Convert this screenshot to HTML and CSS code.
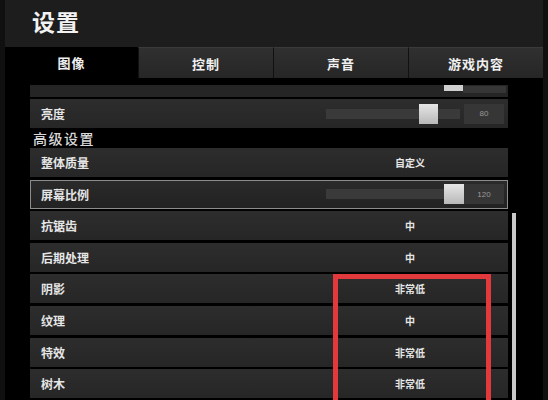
FILE: index.html
```html
<!DOCTYPE html>
<html lang="zh">
<head>
<meta charset="utf-8">
<title>设置</title>
<link rel="stylesheet" href="styles.css">
</head>
<body>
<div class="app">
  <header class="header"><h1 class="title">设置</h1></header>
  <nav class="tabs">
    <div class="tab active">图像</div>
    <div class="tab">控制</div>
    <div class="tab">声音</div>
    <div class="tab">游戏内容</div>
  </nav>
  <main class="content">
    <div class="list">
      <div class="row partial">
        <div class="p-thumb"></div>
        <div class="p-track"></div>
      </div>
      <div class="row">
        <div class="label">亮度</div>
        <div class="slider"><div class="thumb" style="left:93px"></div></div>
        <div class="numbox">80</div>
      </div>
      <div class="section">高级设置</div>
      <div class="rows">
        <div class="row"><div class="label">整体质量</div><div class="value">自定义</div></div>
        <div class="row selected">
          <div class="label">屏幕比例</div>
          <div class="slider"><div class="thumb" style="left:118px"></div></div>
          <div class="numbox">120</div>
        </div>
        <div class="row"><div class="label">抗锯齿</div><div class="value">中</div></div>
        <div class="row"><div class="label">后期处理</div><div class="value">中</div></div>
        <div class="row"><div class="label">阴影</div><div class="value">非常低</div></div>
        <div class="row"><div class="label">纹理</div><div class="value">中</div></div>
        <div class="row"><div class="label">特效</div><div class="value">非常低</div></div>
        <div class="row"><div class="label">树木</div><div class="value">非常低</div></div>
      </div>
    </div>
    <div class="scrollbar"><div class="scroll-thumb"></div></div>
  </main>
  <div class="mark"></div>
</div>
</body>
</html>
```

FILE: styles.css
```css
* { box-sizing: border-box; }
html, body { margin: 0; padding: 0; }
body {
  width: 548px;
  height: 400px;
  overflow: hidden;
  background: #101010;
  font-family: "Noto Sans CJK SC", "Noto Sans", sans-serif;
  color: #e8e8e8;
}
.app {
  margin-left: 5px;
  width: 538px;
  height: 400px;
  background: #000;
  position: relative;
  overflow: hidden;
}
.header {
  height: 47px;
  background: #1d1d1d;
  padding-left: 27px;
  display: flex;
  align-items: center;
}
.title {
  margin: 0;
  font-size: 23px;
  font-weight: 700;
  color: #f2f2f2;
  line-height: 1;
  letter-spacing: 1px;
  margin-top: -4px;
}
.tabs {
  height: 31px;
  display: grid;
  grid-template-columns: 133px 135px 135px 135px;
  background: #000;
}
.tab {
  display: flex;
  align-items: center;
  justify-content: center;
  font-size: 13px;
  font-weight: 700;
  color: #f0f0f0;
  background: linear-gradient(#303030, #262626);
  border-left: 1px solid #111;
  border-top: 1px solid #3a3a3a;
  letter-spacing: 1px;
}
.tab.active {
  background: #000;
  border: none;
}
.content {
  display: flex;
  padding-top: 7px;
  padding-left: 25px;
  height: 322px;
}
.list {
  width: 478px;
}
.row {
  height: 29px;
  display: flex;
  align-items: center;
  padding-left: 11px;
  background: linear-gradient(#2d2d2d, #262626);
}
.row.partial {
  height: 12px;
  align-items: flex-start;
  padding-left: 414px;
  margin-bottom: 2px;
  background: #252525;
}
.p-thumb {
  width: 19px;
  height: 6px;
  background: #cfcfcf;
}
.p-track {
  margin-top: 1px;
  width: 43px;
  height: 7px;
  background: #363636;
}
.label {
  width: 285px;
  font-size: 12px;
  font-weight: 700;
  color: #e6e6e6;
}
.value {
  width: 168px;
  text-align: center;
  font-size: 10px;
  font-weight: 700;
  color: #e6e6e6;
}
.slider {
  width: 134px;
  height: 10px;
  position: relative;
  background: #3a3a3a;
}
.thumb {
  position: absolute;
  top: -5px;
  width: 19px;
  height: 20px;
  background: linear-gradient(#e6e6e6, #b8b8b8);
}
.selected .thumb { width: 20px; }
.numbox {
  margin-left: 4px;
  width: 40px;
  height: 20px;
  background: #363636;
  color: #9a9a9a;
  font-size: 8px;
  display: flex;
  align-items: center;
  justify-content: center;
  font-family: "Liberation Sans", sans-serif;
}
.section {
  height: 20px;
  padding-left: 3px;
  font-size: 14px;
  font-weight: 500;
  color: #d8d8d8;
  line-height: 21px;
  letter-spacing: 1.5px;
}
.rows {
  display: flex;
  flex-direction: column;
  gap: 2.6px;
}
.row.selected {
  border: 1px solid #8c8c8c;
  padding-left: 10px;
  background: linear-gradient(#2a2a2a, #222);
}
.scrollbar {
  margin-left: 4px;
  width: 4px;
  padding-top: 128px;
}
.scroll-thumb {
  width: 4px;
  height: 200px;
  background: #c8c8c8;
}
.mark {
  position: absolute;
  left: 328px;
  top: 274px;
  width: 158px;
  height: 150px;
  border: 5px solid #e2393d;
}
```
